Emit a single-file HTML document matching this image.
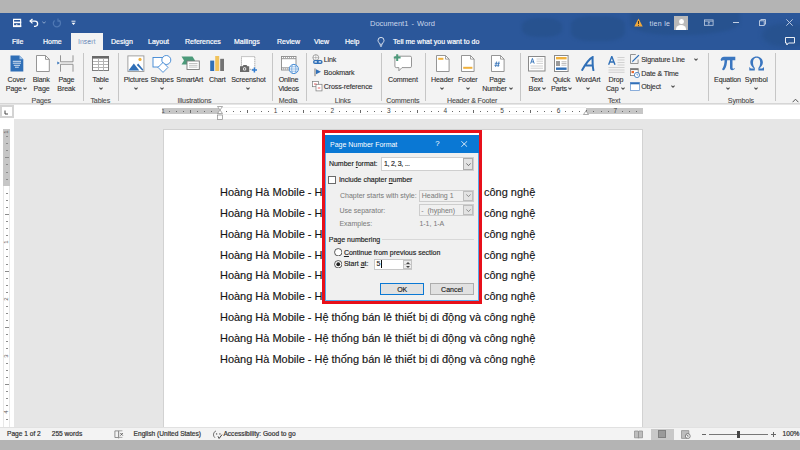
<!DOCTYPE html>
<html><head><meta charset="utf-8">
<style>
*{margin:0;padding:0;box-sizing:border-box}
html,body{width:800px;height:450px;overflow:hidden;background:#e6e6e6;font-family:"Liberation Sans",sans-serif;}
.a{position:absolute}
.t{position:absolute;white-space:nowrap;line-height:1}
#topstrip{left:0;top:0;width:800px;height:13px;background:#b4b4b4}
#title{left:0;top:13px;width:800px;height:37px;background:#2b579a}
#ribbon{left:0;top:50px;width:800px;height:54px;background:#f3f3f3;border-bottom:1px solid #d6d6d6}
#rulerrow{left:0;top:105px;width:800px;height:14px;background:#fff}
#docarea{left:14px;top:119px;width:786px;height:308px;background:#e6e6e6}
#vruler{left:0;top:119px;width:14px;height:308px;background:#fff}
#page{left:163px;top:129px;width:480px;height:298px;background:#fff;border-left:1px solid #d2d2d2;border-top:1px solid #d2d2d2;border-right:1px solid #d2d2d2}
#status{left:0;top:427px;width:800px;height:13px;background:#f3f3f3;border-top:1px solid #e1e1e1}
#botstrip{left:0;top:440px;width:800px;height:10px;background:#b4b4b4}
.tab{color:#fff;font-size:7px;-webkit-text-stroke:0.2px #fff}
.rl{color:#2e2e2e;font-size:7.1px;letter-spacing:-0.15px;-webkit-text-stroke:0.1px #2e2e2e}
.gl{color:#4a4a4a;font-size:7.1px;letter-spacing:-0.15px;-webkit-text-stroke:0.1px #4a4a4a}
.sep{position:absolute;top:53px;width:1px;height:48px;background:#c8c8c8}
.doc{position:absolute;left:220px;font-size:10.97px;color:#151515;white-space:nowrap;line-height:1;-webkit-text-stroke:0.15px #151515}
.dl{position:absolute;white-space:nowrap;line-height:1;font-size:7px;color:#222;-webkit-text-stroke:0.15px #222}
.dg{color:#7d7d7d;-webkit-text-stroke:0.05px #7d7d7d}
</style></head><body>
<div id="topstrip" class="a"></div>
<div id="title" class="a"></div>
<div class="a" style="left:0;top:13px;width:800px;height:37px;overflow:hidden">
<div class="a" style="left:522px;top:5px;width:40px;height:19px;border-radius:40%;background:#27528f;filter:blur(1.5px)"></div>
<div class="a" style="left:571px;top:3px;width:54px;height:25px;border-radius:35%;background:#27528f;filter:blur(1.5px)"></div>
<div class="a" style="left:630px;top:-4px;width:110px;height:26px;border-radius:0 0 50% 40%;background:#27528f;filter:blur(1.5px)"></div>
<div class="a" style="left:762px;top:10px;width:50px;height:24px;border-radius:50%;background:#27528f;filter:blur(2px)"></div>
</div>
<div id="ribbon" class="a"></div>
<div id="rulerrow" class="a"></div>
<div id="vruler" class="a"></div>
<div id="page" class="a"></div>
<div id="status" class="a"></div>
<div id="botstrip" class="a"></div>


<!-- QAT -->
<svg class="a" style="left:12px;top:18px" width="10" height="10" viewBox="0 0 10 10">
<path d="M1.55 1.35h7.1v7.2h-7.1z" fill="none" stroke="#fff" stroke-width="1.1"/>
<rect x="1" y="3.6" width="8.2" height="1.6" fill="#fff"/>
<rect x="1" y="7.2" width="8.2" height="1.9" fill="#fff"/>
<rect x="4" y="6.4" width="1.4" height="1" fill="#fff"/>
</svg>
<svg class="a" style="left:29px;top:18px" width="10" height="10" viewBox="0 0 10 10">
<path d="M1.6 3.1h4.3a2.6 2.6 0 0 1 0.2 5.2H5" fill="none" stroke="#fff" stroke-width="1.3"/>
<path d="M3.5 0.9L1.1 3.1 3.5 5.4" fill="none" stroke="#fff" stroke-width="1.3"/>
</svg>
<svg class="a" style="left:42px;top:21px" width="4" height="3" viewBox="0 0 4 3"><path d="M0.3 0.5L2 2.3 3.7 0.5" fill="none" stroke="#a9bcd9" stroke-width="0.8"/></svg>
<svg class="a" style="left:52px;top:18px" width="10" height="10" viewBox="0 0 10 10">
<path d="M6.8 2.2A3.6 3.6 0 1 1 2.6 2.5" fill="none" stroke="#4f78b3" stroke-width="1.3"/>
<path d="M6 0.5v2.6h2.6" fill="none" stroke="#4f78b3" stroke-width="1.2"/>
</svg>
<svg class="a" style="left:71px;top:20px" width="5" height="6" viewBox="0 0 5 6">
<path d="M0.5 1.2h4" stroke="#fff" stroke-width="0.9"/><path d="M0.5 2.8h4L2.5 5z" fill="#fff"/>
</svg>
<div class="t" style="left:370px;top:20px;font-size:7.5px;color:#c9d6ea;word-spacing:1px">Document1  -  Word</div>
<!-- right side -->
<svg class="a" style="left:634px;top:18px" width="9" height="9" viewBox="0 0 9 9"><path d="M4.5 0.5L8.7 8.5H0.3z" fill="#f2a93b"/><path d="M4.5 3v3" stroke="#222" stroke-width="0.9"/><circle cx="4.5" cy="7.3" r="0.5" fill="#222"/></svg>
<div class="t" style="left:649.5px;top:19.8px;font-size:7px;letter-spacing:0.3px;color:#cdd9ec">tien le</div>
<div class="a" style="left:674px;top:16px;width:14px;height:14px;background:#b9b9b9;overflow:hidden">
<div class="a" style="left:4.5px;top:2.5px;width:5px;height:5.5px;border-radius:50%;background:#fff"></div>
<div class="a" style="left:2px;top:8.5px;width:10px;height:8px;border-radius:50% 50% 0 0;background:#fff"></div>
</div>
<svg class="a" style="left:703.5px;top:19px" width="10" height="7" viewBox="0 0 10 7"><rect x="0.5" y="0.9" width="8.6" height="5.4" fill="none" stroke="#c3d0e4" stroke-width="0.8"/><path d="M0.5 2.2h8.6" stroke="#c3d0e4" stroke-width="0.7"/><path d="M4.8 3v3M3.7 4L4.8 3 5.9 4" fill="none" stroke="#c3d0e4" stroke-width="0.7"/></svg>
<div class="a" style="left:733px;top:21.5px;width:6px;height:1px;background:#c3d0e4"></div>
<svg class="a" style="left:759px;top:19px" width="7" height="7" viewBox="0 0 7 7"><rect x="0.5" y="1.8" width="4.7" height="4.7" fill="none" stroke="#c3d0e4" stroke-width="0.9"/><path d="M1.8 1.8V0.5h4.7v4.7H5.2" fill="none" stroke="#c3d0e4" stroke-width="0.9"/></svg>
<svg class="a" style="left:786px;top:18.5px" width="7" height="7" viewBox="0 0 7 7"><path d="M0.3 0.3L6.7 6.7M6.7 0.3L0.3 6.7" stroke="#c3d0e4" stroke-width="0.9"/></svg>
<svg class="a" style="left:785px;top:37px" width="10" height="9" viewBox="0 0 10 9"><path d="M0.5 0.5h9v5.5H3.5L1.8 8V6H0.5z" fill="none" stroke="#fff" stroke-width="0.9"/></svg>


<!-- tabs -->
<div class="a" style="left:71px;top:33px;width:32px;height:17px;background:#f3f3f3"></div>
<div class="t tab" style="left:12px;top:38px">File</div>
<div class="t tab" style="left:43px;top:38px">Home</div>
<div class="t tab" style="left:78px;top:38px;color:#2b579a">Insert</div>
<div class="t tab" style="left:111px;top:38px">Design</div>
<div class="t tab" style="left:148px;top:38px">Layout</div>
<div class="t tab" style="left:185px;top:38px">References</div>
<div class="t tab" style="left:234px;top:38px">Mailings</div>
<div class="t tab" style="left:277px;top:38px">Review</div>
<div class="t tab" style="left:314px;top:38px">View</div>
<div class="t tab" style="left:345px;top:38px">Help</div>
<div class="t tab" style="left:393px;top:38px">Tell me what you want to do</div>
<svg class="a" style="left:377px;top:37px" width="8" height="10" viewBox="0 0 8 10"><path d="M2.6 7.2C2.6 5.8 1 5 1 3.4A3 3 0 0 1 7 3.4C7 5 5.4 5.8 5.4 7.2z" fill="none" stroke="#fff" stroke-width="0.8"/><path d="M2.8 8.3h2.4M3.2 9.4h1.6" stroke="#fff" stroke-width="0.7"/></svg>


<!-- RIBBON -->
<!-- Cover Page -->
<svg class="a" style="left:10px;top:55px" width="14" height="17" viewBox="0 0 14 17">
<path d="M0.5 0.5h9l3.8 3.8v12.2H0.5z" fill="#2f6fb7"/>
<path d="M9.5 0.5v3.8h3.8" fill="#9dc0e6"/>
<path d="M2.8 6.3h8.2M2.8 8.2h8.2M3.8 10.3h6.2M5 12.2h3.8" stroke="#fff" stroke-width="0.8"/>
</svg>
<!-- Blank Page -->
<svg class="a" style="left:35.5px;top:55px" width="14" height="17" viewBox="0 0 14 17">
<path d="M0.5 0.5h9l3.8 3.8v12.2H0.5z" fill="#fff" stroke="#8a8a8a" stroke-width="0.9"/>
<path d="M9.5 0.5v3.8h3.8" fill="none" stroke="#8a8a8a" stroke-width="0.9"/>
</svg>
<!-- Page Break -->
<svg class="a" style="left:57px;top:55px" width="17" height="17" viewBox="0 0 17 17">
<path d="M3.5 0.3v6.5h12.5V0.3" fill="none" stroke="#8a8a8a" stroke-width="0.9"/>
<path d="M3.5 16.7V9.3h12.5v7.4" fill="none" stroke="#8a8a8a" stroke-width="0.9"/>
<path d="M0.3 6.5L2.8 8 0.3 9.5z" fill="#2f6fb7"/>
</svg>
<!-- Table -->
<svg class="a" style="left:92px;top:56px" width="17" height="15" viewBox="0 0 17 15">
<rect x="0.5" y="0.5" width="16" height="14" fill="#fff" stroke="#7e7e7e" stroke-width="1"/>
<rect x="0" y="0" width="17" height="2.6" fill="#686868"/>
<path d="M1 5.5h15M1 8.5h15M1 11.5h15M6.5 2.6v11.9M11.5 2.6v11.9" stroke="#b4b4b4" stroke-width="1"/>
</svg>
<!-- Pictures -->
<svg class="a" style="left:127px;top:55px" width="18" height="17" viewBox="0 0 18 17">
<rect x="0.9" y="0.9" width="16" height="15.6" fill="#fff" stroke="#999" stroke-width="0.9"/>
<path d="M1.5 15.6L6.8 8.6 12.3 15.6z" fill="#2f6fb7"/>
<path d="M9.8 10L11.2 8.6 16.2 14.6 16.2 15.6H15.2z" fill="#2f6fb7"/>
<circle cx="13" cy="4.4" r="1.6" fill="#f0b13c"/>
</svg>
<!-- Shapes -->
<svg class="a" style="left:152px;top:54.5px" width="20" height="18" viewBox="0 0 20 18">
<rect x="1" y="2.5" width="10" height="9.5" fill="#fff" stroke="#3d86d3" stroke-width="0.9"/>
<circle cx="14.3" cy="5" r="4.5" fill="#fff" stroke="#3d86d3" stroke-width="0.9"/>
<path d="M11 7.4L16 12.4 11 17.4 6 12.4z" fill="#fff" stroke="#3d86d3" stroke-width="0.9"/>
</svg>
<!-- SmartArt -->
<svg class="a" style="left:181px;top:56px" width="19" height="14" viewBox="0 0 19 14">
<path d="M0.5 0.5h11l2.5 4-2.5 4h-11l2.5-4z" fill="#4c9a7a"/>
<rect x="6" y="5" width="12.3" height="8.5" fill="#fff" stroke="#7a7a7a" stroke-width="0.9"/>
<path d="M8 7.5h8.5M8 9.3h8.5M8 11.1h8.5" stroke="#9a9a9a" stroke-width="0.6"/>
</svg>
<!-- Chart -->
<svg class="a" style="left:210px;top:56px" width="15" height="15" viewBox="0 0 15 15">
<rect x="0.2" y="4.6" width="4" height="10.4" fill="#2f6fb7"/>
<rect x="5.2" y="0" width="4" height="15" fill="#f0c25c"/>
<rect x="10.2" y="2.8" width="3.8" height="12.2" fill="#737373"/>
</svg>
<!-- Screenshot -->
<svg class="a" style="left:240px;top:55.5px" width="17" height="17" viewBox="0 0 17 17">
<rect x="1.5" y="0.6" width="13.3" height="12.7" fill="#fff" stroke="#777" stroke-width="0.8" stroke-dasharray="1 1"/>
<path d="M0 10.2h2.5l1-1.3h3l1 1.3H9.2V16H0z" fill="#6a6a6a"/>
<circle cx="4.6" cy="12.9" r="1.7" fill="#fff"/>
<circle cx="4.6" cy="12.9" r="0.9" fill="#6a6a6a"/>
<path d="M14.4 11.4v5.2M11.8 14h5.2" stroke="#2f7bd0" stroke-width="1.5"/>
</svg>
<!-- Online Videos -->
<svg class="a" style="left:281px;top:55.5px" width="18" height="18" viewBox="0 0 18 18">
<rect x="0.5" y="0.5" width="14.5" height="13.5" fill="#fff" stroke="#8a8a8a" stroke-width="0.9"/>
<path d="M0.5 2.7h14.5M0.5 11.8h14.5" stroke="#8a8a8a" stroke-width="0.9"/>
<path d="M2 1.6h1M4 1.6h1M6 1.6h1M8 1.6h1M10 1.6h1M12 1.6h1M2 12.9h1M4 12.9h1M6 12.9h1M8 12.9h1" stroke="#8a8a8a" stroke-width="0.8"/>
<circle cx="12.8" cy="13" r="4.6" fill="#fff" stroke="#3d86d3" stroke-width="0.9"/>
<path d="M8.2 13h9.2M9.2 10.8h7.2M9.2 15.2h7.2" stroke="#3d86d3" stroke-width="0.55"/>
<ellipse cx="12.8" cy="13" rx="2.1" ry="4.6" fill="none" stroke="#3d86d3" stroke-width="0.55"/>
</svg>
<!-- Link -->
<svg class="a" style="left:311.5px;top:53.5px" width="11" height="10.5" viewBox="0 0 11 10.5">
<circle cx="3.8" cy="3.6" r="2.9" fill="#fff" stroke="#7a7a7a" stroke-width="0.7"/>
<path d="M0.9 3.6h5.8M3.8 0.7v5.8" stroke="#8a8a8a" stroke-width="0.5"/>
<rect x="1" y="6" width="9.6" height="3.9" rx="1.95" fill="#2f6fb7"/>
<rect x="2.4" y="7.3" width="2.6" height="1.3" rx="0.65" fill="#fff"/>
<rect x="6.6" y="7.3" width="2.6" height="1.3" rx="0.65" fill="#fff"/>
</svg>
<!-- Bookmark -->
<svg class="a" style="left:313.5px;top:68px" width="8" height="8.5" viewBox="0 0 8 8.5">
<path d="M1 0.4v7.8" stroke="#6a6a6a" stroke-width="0.9"/>
<path d="M2 1.2l5 2.5-5 2.5z" fill="#2f6fb7"/>
</svg>
<!-- Cross-reference -->
<svg class="a" style="left:312px;top:81px" width="10.5" height="10.5" viewBox="0 0 10.5 10.5">
<rect x="0.4" y="0.4" width="6" height="5.3" fill="#fff" stroke="#7a7a7a" stroke-width="0.7"/>
<rect x="4" y="3.3" width="6" height="6.6" fill="#fff" stroke="#7a7a7a" stroke-width="0.7"/>
<path d="M2 3h2.5M5.8 7h2.5" stroke="#e03b3b" stroke-width="0.8"/>
</svg>
<!-- Comment -->
<svg class="a" style="left:392.5px;top:54px" width="20" height="18" viewBox="0 0 20 18">
<path d="M3.3 2.2h13.8a1.4 1.4 0 0 1 1.4 1.4v8.6a1.4 1.4 0 0 1-1.4 1.4H9L5.9 16.8V13.6H3.3a1.4 1.4 0 0 1-1.4-1.4V3.6A1.4 1.4 0 0 1 3.3 2.2z" fill="#fff" stroke="#8a8a8a" stroke-width="0.9"/>
<path d="M4.2 0.2v6.8M0.8 3.6h6.8" stroke="#4c9a7a" stroke-width="2"/>
</svg>
<!-- Header -->
<svg class="a" style="left:436px;top:55px" width="14" height="17" viewBox="0 0 14 17">
<path d="M0.5 0.5h9l3.6 3.6v12.4H0.5z" fill="#fff" stroke="#8a8a8a" stroke-width="0.9"/>
<path d="M9.5 0.5v3.6h3.6" fill="none" stroke="#8a8a8a" stroke-width="0.8"/>
<rect x="2.2" y="2.8" width="5.2" height="2" fill="#f0b13c"/>
</svg>
<!-- Footer -->
<svg class="a" style="left:461px;top:55px" width="14" height="17" viewBox="0 0 14 17">
<path d="M0.5 0.5h9l3.6 3.6v12.4H0.5z" fill="#fff" stroke="#8a8a8a" stroke-width="0.9"/>
<path d="M9.5 0.5v3.6h3.6" fill="none" stroke="#8a8a8a" stroke-width="0.8"/>
<rect x="2.2" y="11.8" width="9.2" height="2" fill="#f0b13c"/>
</svg>
<!-- Page Number -->
<svg class="a" style="left:491px;top:55px" width="14" height="17" viewBox="0 0 14 17">
<path d="M0.5 0.5h9l3.6 3.6v12.4H0.5z" fill="#fff" stroke="#8a8a8a" stroke-width="0.9"/>
<path d="M9.5 0.5v3.6h3.6" fill="none" stroke="#8a8a8a" stroke-width="0.8"/>
<path d="M5.6 6.5l-1 5.5M8 6.5l-1 5.5M3.8 8.3h5M3.4 10.3h5" stroke="#2f6fb7" stroke-width="0.8"/>
</svg>
<!-- Text Box -->
<svg class="a" style="left:528px;top:55.5px" width="18" height="16" viewBox="0 0 18 16">
<rect x="0.5" y="0.5" width="16.5" height="14.5" fill="#fff" stroke="#8a8a8a" stroke-width="1"/>
<path d="M2.6 7.6L4.4 2.4 6.2 7.6M3.2 5.9h2.4" fill="none" stroke="#2f6fb7" stroke-width="0.9"/>
<path d="M8.5 3h6.5M8.5 5.2h6.5M8.5 7.4h6.5M2.5 10h12.5M2.5 12.2h12.5" stroke="#b4b4b4" stroke-width="0.6"/>
</svg>
<!-- Quick Parts -->
<svg class="a" style="left:554px;top:55px" width="15" height="17" viewBox="0 0 15 17">
<rect x="0.5" y="0.5" width="13.6" height="16" fill="#fff" stroke="#8a8a8a" stroke-width="1"/>
<rect x="2" y="2" width="10.6" height="2.4" fill="#f0b13c"/>
<rect x="2" y="6" width="4" height="5" fill="#9a9a9a"/>
<path d="M7.5 6.8h5M7.5 8.5h5M7.5 10.2h5" stroke="#a0a0a0" stroke-width="0.7"/>
<rect x="2" y="12.5" width="10.6" height="2.4" fill="#2f6fb7"/>
</svg>
<!-- WordArt -->
<svg class="a" style="left:580.5px;top:55.5px" width="14" height="15" viewBox="0 0 14 15">
<path d="M1.2 14C4 9 8 3.2 11.6 1.2c0 4-0.2 8.8 0.8 13M4.5 9.6h7.4" fill="none" stroke="#2f6fb7" stroke-width="2" stroke-linecap="round"/>
</svg>
<!-- Drop Cap -->
<svg class="a" style="left:607.5px;top:55.5px" width="17" height="17" viewBox="0 0 17 17">
<path d="M0.6 8.8L3.8 0.4 7 8.8M1.8 6h4" fill="none" stroke="#2f6fb7" stroke-width="1.4"/>
<path d="M9.5 1.5h7M9.5 4h7M9.5 6.5h7M9.5 9h7M0.5 11.5h16M0.5 14h16M0.5 16.3h16" stroke="#c2c2c2" stroke-width="0.7"/>
</svg>
<!-- Signature Line -->
<svg class="a" style="left:629.5px;top:54px" width="10" height="10" viewBox="0 0 10 10">
<path d="M5.8 0.5H0.5v9h7.6V5.5" fill="none" stroke="#7a7a7a" stroke-width="0.8"/>
<path d="M2.6 7.4L8.9 1.1" stroke="#2f6fb7" stroke-width="1.3"/>
<path d="M1.8 8.4l0.6-1.3 0.7 0.7z" fill="#2f6fb7"/>
</svg>
<!-- Date & Time -->
<svg class="a" style="left:629.5px;top:67.5px" width="10" height="10" viewBox="0 0 10 10">
<rect x="0.4" y="0.6" width="7.8" height="7" fill="#fff" stroke="#7a7a7a" stroke-width="0.8"/>
<rect x="0.4" y="0.6" width="7.8" height="1.5" fill="#7a7a7a"/>
<rect x="1.5" y="3" width="2.5" height="2.2" fill="#e86a2f"/>
<circle cx="7" cy="7" r="2.6" fill="#fff" stroke="#2f6fb7" stroke-width="0.8"/>
<path d="M7 5.5V7h1.2" fill="none" stroke="#2f6fb7" stroke-width="0.6"/>
</svg>
<!-- Object -->
<svg class="a" style="left:629.5px;top:81.5px" width="10" height="9" viewBox="0 0 10 9">
<rect x="0.4" y="0.5" width="9" height="8" fill="#fff" stroke="#6f9bd3" stroke-width="0.8"/>
<rect x="0.4" y="0.5" width="9" height="1.8" fill="#2f6fb7"/>
</svg>
<!-- Equation pi -->
<svg class="a" style="left:720px;top:55.5px" width="16" height="15" viewBox="0 0 16 15">
<path d="M0.6 3.8C1.2 1.8 2.2 0.8 4 0.8H15.3V4.3H3.8C2.6 4.3 1.8 4.5 1.2 5z" fill="#3a76c0"/>
<path d="M4.6 4h2.6C7 7.5 6.4 11 4.6 13.6 4 14.4 3.2 14.4 2.6 14 2 13.5 2.2 12.8 2.8 12 4 10 4.5 7 4.6 4z" fill="#3a76c0"/>
<path d="M10 4h2.5v7.5c0 0.9 0.4 1.2 0.9 1.2 0.4 0 0.8-0.2 1.1-0.6l0.4 0.4C14.2 13.6 13.2 14.2 12.2 14.2 10.8 14.2 10 13.3 10 11.5z" fill="#3a76c0"/>
</svg>
<!-- Symbol Omega -->
<svg class="a" style="left:748.5px;top:56px" width="16" height="15" viewBox="0 0 16 15">
<path d="M0.3 14.6V11.2h0.6c0.2 0.8 0.5 1.2 1.2 1.2H5C3 11 1.3 9 1.3 6.3 1.3 2.8 4.2 0.4 7.6 0.4S13.9 2.8 13.9 6.3C13.9 9 12.2 11 10.2 12.4h3c0.7 0 1-0.4 1.2-1.2h0.6v3.4H9.4V12C10.6 10.6 11.2 8.6 11.2 6.5 11.2 3.5 9.8 1.8 7.6 1.8S4 3.5 4 6.5C4 8.6 4.6 10.6 5.8 12v2.6z" fill="#3a76c0"/>
</svg>
<div class="a" style="left:83px;top:53px;width:1px;height:48px;background:#c6c6c6"></div>
<div class="a" style="left:117.5px;top:53px;width:1px;height:48px;background:#c6c6c6"></div>
<div class="a" style="left:271.5px;top:53px;width:1px;height:48px;background:#c6c6c6"></div>
<div class="a" style="left:305.5px;top:53px;width:1px;height:48px;background:#c6c6c6"></div>
<div class="a" style="left:381px;top:53px;width:1px;height:48px;background:#c6c6c6"></div>
<div class="a" style="left:425px;top:53px;width:1px;height:48px;background:#c6c6c6"></div>
<div class="a" style="left:519.5px;top:53px;width:1px;height:48px;background:#c6c6c6"></div>
<div class="a" style="left:708px;top:53px;width:1px;height:48px;background:#c6c6c6"></div>
<div class="a" style="left:774.5px;top:53px;width:1px;height:48px;background:#c6c6c6"></div>
<div class="t rl" style="left:-43.5px;top:77.0px;width:120px;text-align:center;">Cover</div>
<div class="t rl" style="left:-46.2px;top:86.3px;width:120px;text-align:center;">Page</div>
<svg class="a" style="left:23.3px;top:86.8px" width="4" height="3" viewBox="0 0 4 3"><path d="M0.4 0.6L2 2.2 3.6 0.6" fill="none" stroke="#555" stroke-width="1.1"/></svg>
<div class="t rl" style="left:-18.75px;top:77.0px;width:120px;text-align:center;">Blank</div>
<div class="t rl" style="left:-18.5px;top:86.3px;width:120px;text-align:center;">Page</div>
<div class="t rl" style="left:6.400000000000006px;top:77.0px;width:120px;text-align:center;">Page</div>
<div class="t rl" style="left:6.25px;top:86.3px;width:120px;text-align:center;">Break</div>
<div class="t gl" style="left:-18.75px;top:98.1px;width:120px;text-align:center;">Pages</div>
<div class="t rl" style="left:40.599999999999994px;top:77.0px;width:120px;text-align:center;">Table</div>
<svg class="a" style="left:98.5px;top:86.8px" width="4" height="3" viewBox="0 0 4 3"><path d="M0.4 0.6L2 2.2 3.6 0.6" fill="none" stroke="#555" stroke-width="1.1"/></svg>
<div class="t gl" style="left:40.25px;top:98.1px;width:120px;text-align:center;">Tables</div>
<div class="t rl" style="left:75.9px;top:77.0px;width:120px;text-align:center;">Pictures</div>
<svg class="a" style="left:133.5px;top:86.8px" width="4" height="3" viewBox="0 0 4 3"><path d="M0.4 0.6L2 2.2 3.6 0.6" fill="none" stroke="#555" stroke-width="1.1"/></svg>
<div class="t rl" style="left:102px;top:77.0px;width:120px;text-align:center;">Shapes</div>
<svg class="a" style="left:160px;top:86.8px" width="4" height="3" viewBox="0 0 4 3"><path d="M0.4 0.6L2 2.2 3.6 0.6" fill="none" stroke="#555" stroke-width="1.1"/></svg>
<div class="t rl" style="left:129.75px;top:77.0px;width:120px;text-align:center;">SmartArt</div>
<div class="t rl" style="left:157.25px;top:77.0px;width:120px;text-align:center;">Chart</div>
<div class="t rl" style="left:188.4px;top:77.0px;width:120px;text-align:center;">Screenshot</div>
<svg class="a" style="left:246px;top:86.8px" width="4" height="3" viewBox="0 0 4 3"><path d="M0.4 0.6L2 2.2 3.6 0.6" fill="none" stroke="#555" stroke-width="1.1"/></svg>
<div class="t gl" style="left:134.4px;top:98.1px;width:120px;text-align:center;">Illustrations</div>
<div class="t rl" style="left:228.5px;top:77.0px;width:120px;text-align:center;">Online</div>
<div class="t rl" style="left:228.5px;top:86.3px;width:120px;text-align:center;">Videos</div>
<div class="t gl" style="left:228.10000000000002px;top:98.1px;width:120px;text-align:center;">Media</div>
<div class="t rl" style="left:323.75px;top:57px">Link</div>
<div class="t rl" style="left:323.75px;top:70.4px">Bookmark</div>
<div class="t rl" style="left:323.75px;top:84.2px">Cross-reference</div>
<div class="t gl" style="left:282.75px;top:98.1px;width:120px;text-align:center;">Links</div>
<div class="t rl" style="left:342.9px;top:77.0px;width:120px;text-align:center;">Comment</div>
<div class="t gl" style="left:342.9px;top:98.1px;width:120px;text-align:center;">Comments</div>
<div class="t rl" style="left:382.25px;top:77.0px;width:120px;text-align:center;">Header</div>
<svg class="a" style="left:440px;top:86.8px" width="4" height="3" viewBox="0 0 4 3"><path d="M0.4 0.6L2 2.2 3.6 0.6" fill="none" stroke="#555" stroke-width="1.1"/></svg>
<div class="t rl" style="left:407.75px;top:77.0px;width:120px;text-align:center;">Footer</div>
<svg class="a" style="left:465.5px;top:86.8px" width="4" height="3" viewBox="0 0 4 3"><path d="M0.4 0.6L2 2.2 3.6 0.6" fill="none" stroke="#555" stroke-width="1.1"/></svg>
<div class="t rl" style="left:437.25px;top:77.0px;width:120px;text-align:center;">Page</div>
<div class="t rl" style="left:434.5px;top:86.3px;width:120px;text-align:center;">Number</div>
<svg class="a" style="left:509px;top:86.8px" width="4" height="3" viewBox="0 0 4 3"><path d="M0.4 0.6L2 2.2 3.6 0.6" fill="none" stroke="#555" stroke-width="1.1"/></svg>
<div class="t gl" style="left:412.1px;top:98.1px;width:120px;text-align:center;">Header &amp; Footer</div>
<div class="t rl" style="left:476.75px;top:77.0px;width:120px;text-align:center;">Text</div>
<div class="t rl" style="left:474.5px;top:86.3px;width:120px;text-align:center;">Box</div>
<svg class="a" style="left:541.5px;top:86.8px" width="4" height="3" viewBox="0 0 4 3"><path d="M0.4 0.6L2 2.2 3.6 0.6" fill="none" stroke="#555" stroke-width="1.1"/></svg>
<div class="t rl" style="left:501.4px;top:77.0px;width:120px;text-align:center;">Quick</div>
<div class="t rl" style="left:499px;top:86.3px;width:120px;text-align:center;">Parts</div>
<svg class="a" style="left:567.5px;top:86.8px" width="4" height="3" viewBox="0 0 4 3"><path d="M0.4 0.6L2 2.2 3.6 0.6" fill="none" stroke="#555" stroke-width="1.1"/></svg>
<div class="t rl" style="left:528px;top:77.0px;width:120px;text-align:center;">WordArt</div>
<svg class="a" style="left:586px;top:86.8px" width="4" height="3" viewBox="0 0 4 3"><path d="M0.4 0.6L2 2.2 3.6 0.6" fill="none" stroke="#555" stroke-width="1.1"/></svg>
<div class="t rl" style="left:556px;top:77.0px;width:120px;text-align:center;">Drop</div>
<div class="t rl" style="left:552.2px;top:86.3px;width:120px;text-align:center;">Cap</div>
<svg class="a" style="left:620.8px;top:86.8px" width="4" height="3" viewBox="0 0 4 3"><path d="M0.4 0.6L2 2.2 3.6 0.6" fill="none" stroke="#555" stroke-width="1.1"/></svg>
<div class="t rl" style="left:641.25px;top:57px">Signature Line</div>
<svg class="a" style="left:694px;top:58.0px" width="4" height="3" viewBox="0 0 4 3"><path d="M0.4 0.6L2 2.2 3.6 0.6" fill="none" stroke="#555" stroke-width="1.1"/></svg>
<div class="t rl" style="left:641.25px;top:70.5px">Date &amp; Time</div>
<div class="t rl" style="left:641.25px;top:84.2px">Object</div>
<svg class="a" style="left:670.5px;top:85.0px" width="4" height="3" viewBox="0 0 4 3"><path d="M0.4 0.6L2 2.2 3.6 0.6" fill="none" stroke="#555" stroke-width="1.1"/></svg>
<div class="t gl" style="left:554.1px;top:98.1px;width:120px;text-align:center;">Text</div>
<div class="t rl" style="left:667.5px;top:77.0px;width:120px;text-align:center;">Equation</div>
<svg class="a" style="left:725.5px;top:86.8px" width="4" height="3" viewBox="0 0 4 3"><path d="M0.4 0.6L2 2.2 3.6 0.6" fill="none" stroke="#555" stroke-width="1.1"/></svg>
<div class="t rl" style="left:696.25px;top:77.0px;width:120px;text-align:center;">Symbol</div>
<svg class="a" style="left:754px;top:86.8px" width="4" height="3" viewBox="0 0 4 3"><path d="M0.4 0.6L2 2.2 3.6 0.6" fill="none" stroke="#555" stroke-width="1.1"/></svg>
<div class="t gl" style="left:680.9px;top:98.1px;width:120px;text-align:center;">Symbols</div>
<svg class="a" style="left:792px;top:98px" width="7" height="5" viewBox="0 0 7 5"><path d="M0.6 4.2L3.5 1.2 6.4 4.2" fill="none" stroke="#555" stroke-width="1"/></svg>
<!-- /RIBBON -->
<!-- REST -->
<div class="a" style="left:219px;top:107px;width:367px;height:8px;border-top:1px solid #f1f1f1;border-bottom:1px solid #f1f1f1"></div>
<div class="a" style="left:162px;top:108px;width:57px;height:6px;background:#c6c6c6"></div>
<div class="a" style="left:586px;top:108px;width:57px;height:6px;background:#c6c6c6"></div>
<div class="a" style="left:211.43px;top:110.5px;width:1px;height:1px;background:#6a6a6a"></div>
<div class="a" style="left:204.35px;top:110.5px;width:1px;height:1px;background:#6a6a6a"></div>
<div class="a" style="left:197.28px;top:110.5px;width:1px;height:1px;background:#6a6a6a"></div>
<div class="a" style="left:190.20px;top:109.5px;width:1px;height:3px;background:#6a6a6a"></div>
<div class="a" style="left:183.12px;top:110.5px;width:1px;height:1px;background:#6a6a6a"></div>
<div class="a" style="left:176.05px;top:110.5px;width:1px;height:1px;background:#6a6a6a"></div>
<div class="a" style="left:168.97px;top:110.5px;width:1px;height:1px;background:#6a6a6a"></div>
<div class="t" style="left:161.5px;top:108px;font-size:6px;color:#555">1</div>
<div class="a" style="left:225.57px;top:110.5px;width:1px;height:1px;background:#6a6a6a"></div>
<div class="a" style="left:232.65px;top:110.5px;width:1px;height:1px;background:#6a6a6a"></div>
<div class="a" style="left:239.72px;top:110.5px;width:1px;height:1px;background:#6a6a6a"></div>
<div class="a" style="left:246.80px;top:109.5px;width:1px;height:3px;background:#6a6a6a"></div>
<div class="a" style="left:253.88px;top:110.5px;width:1px;height:1px;background:#6a6a6a"></div>
<div class="a" style="left:260.95px;top:110.5px;width:1px;height:1px;background:#6a6a6a"></div>
<div class="a" style="left:268.02px;top:110.5px;width:1px;height:1px;background:#6a6a6a"></div>
<div class="a" style="left:282.18px;top:110.5px;width:1px;height:1px;background:#6a6a6a"></div>
<div class="a" style="left:289.25px;top:110.5px;width:1px;height:1px;background:#6a6a6a"></div>
<div class="a" style="left:296.33px;top:110.5px;width:1px;height:1px;background:#6a6a6a"></div>
<div class="a" style="left:303.40px;top:109.5px;width:1px;height:3px;background:#6a6a6a"></div>
<div class="a" style="left:310.48px;top:110.5px;width:1px;height:1px;background:#6a6a6a"></div>
<div class="a" style="left:317.55px;top:110.5px;width:1px;height:1px;background:#6a6a6a"></div>
<div class="a" style="left:324.62px;top:110.5px;width:1px;height:1px;background:#6a6a6a"></div>
<div class="t" style="left:215.60px;width:120px;text-align:center;top:107.8px;font-size:6.5px;color:#444">1</div>
<div class="a" style="left:338.77px;top:110.5px;width:1px;height:1px;background:#6a6a6a"></div>
<div class="a" style="left:345.85px;top:110.5px;width:1px;height:1px;background:#6a6a6a"></div>
<div class="a" style="left:352.93px;top:110.5px;width:1px;height:1px;background:#6a6a6a"></div>
<div class="a" style="left:360.00px;top:109.5px;width:1px;height:3px;background:#6a6a6a"></div>
<div class="a" style="left:367.07px;top:110.5px;width:1px;height:1px;background:#6a6a6a"></div>
<div class="a" style="left:374.15px;top:110.5px;width:1px;height:1px;background:#6a6a6a"></div>
<div class="a" style="left:381.22px;top:110.5px;width:1px;height:1px;background:#6a6a6a"></div>
<div class="t" style="left:272.20px;width:120px;text-align:center;top:107.8px;font-size:6.5px;color:#444">2</div>
<div class="a" style="left:395.38px;top:110.5px;width:1px;height:1px;background:#6a6a6a"></div>
<div class="a" style="left:402.45px;top:110.5px;width:1px;height:1px;background:#6a6a6a"></div>
<div class="a" style="left:409.53px;top:110.5px;width:1px;height:1px;background:#6a6a6a"></div>
<div class="a" style="left:416.60px;top:109.5px;width:1px;height:3px;background:#6a6a6a"></div>
<div class="a" style="left:423.68px;top:110.5px;width:1px;height:1px;background:#6a6a6a"></div>
<div class="a" style="left:430.75px;top:110.5px;width:1px;height:1px;background:#6a6a6a"></div>
<div class="a" style="left:437.82px;top:110.5px;width:1px;height:1px;background:#6a6a6a"></div>
<div class="t" style="left:328.80px;width:120px;text-align:center;top:107.8px;font-size:6.5px;color:#444">3</div>
<div class="a" style="left:451.97px;top:110.5px;width:1px;height:1px;background:#6a6a6a"></div>
<div class="a" style="left:459.05px;top:110.5px;width:1px;height:1px;background:#6a6a6a"></div>
<div class="a" style="left:466.12px;top:110.5px;width:1px;height:1px;background:#6a6a6a"></div>
<div class="a" style="left:473.20px;top:109.5px;width:1px;height:3px;background:#6a6a6a"></div>
<div class="a" style="left:480.27px;top:110.5px;width:1px;height:1px;background:#6a6a6a"></div>
<div class="a" style="left:487.35px;top:110.5px;width:1px;height:1px;background:#6a6a6a"></div>
<div class="a" style="left:494.42px;top:110.5px;width:1px;height:1px;background:#6a6a6a"></div>
<div class="t" style="left:385.40px;width:120px;text-align:center;top:107.8px;font-size:6.5px;color:#444">4</div>
<div class="a" style="left:508.57px;top:110.5px;width:1px;height:1px;background:#6a6a6a"></div>
<div class="a" style="left:515.65px;top:110.5px;width:1px;height:1px;background:#6a6a6a"></div>
<div class="a" style="left:522.73px;top:110.5px;width:1px;height:1px;background:#6a6a6a"></div>
<div class="a" style="left:529.80px;top:109.5px;width:1px;height:3px;background:#6a6a6a"></div>
<div class="a" style="left:536.88px;top:110.5px;width:1px;height:1px;background:#6a6a6a"></div>
<div class="a" style="left:543.95px;top:110.5px;width:1px;height:1px;background:#6a6a6a"></div>
<div class="a" style="left:551.02px;top:110.5px;width:1px;height:1px;background:#6a6a6a"></div>
<div class="t" style="left:442.00px;width:120px;text-align:center;top:107.8px;font-size:6.5px;color:#444">5</div>
<div class="a" style="left:565.18px;top:110.5px;width:1px;height:1px;background:#6a6a6a"></div>
<div class="a" style="left:572.25px;top:110.5px;width:1px;height:1px;background:#6a6a6a"></div>
<div class="a" style="left:579.33px;top:110.5px;width:1px;height:1px;background:#6a6a6a"></div>
<div class="a" style="left:586.40px;top:109.5px;width:1px;height:3px;background:#6a6a6a"></div>
<div class="a" style="left:593.48px;top:110.5px;width:1px;height:1px;background:#6a6a6a"></div>
<div class="a" style="left:600.55px;top:110.5px;width:1px;height:1px;background:#6a6a6a"></div>
<div class="a" style="left:607.62px;top:110.5px;width:1px;height:1px;background:#6a6a6a"></div>
<div class="t" style="left:498.60px;width:120px;text-align:center;top:107.8px;font-size:6.5px;color:#444">6</div>
<div class="a" style="left:621.78px;top:110.5px;width:1px;height:1px;background:#6a6a6a"></div>
<div class="a" style="left:628.85px;top:110.5px;width:1px;height:1px;background:#6a6a6a"></div>
<div class="a" style="left:635.93px;top:110.5px;width:1px;height:1px;background:#6a6a6a"></div>
<div class="t" style="left:555.20px;width:120px;text-align:center;top:107.8px;font-size:6.5px;color:#444">7</div>
<svg class="a" style="left:216.5px;top:105.5px" width="6" height="14" viewBox="0 0 6 14"><path d="M0.5 0.5h5L3 4 5.5 7.5h-5L3 4z" fill="#fff" stroke="#888" stroke-width="0.7"/><rect x="0.5" y="9" width="5" height="4.5" fill="#fff" stroke="#888" stroke-width="0.7"/></svg>
<svg class="a" style="left:583px;top:110px" width="6" height="5" viewBox="0 0 6 5"><path d="M0.5 4.5L3 0.8 5.5 4.5z" fill="#fff" stroke="#888" stroke-width="0.7"/></svg>
<div class="a" style="left:0px;top:105px;width:14px;height:13px;background:#d4d4d4"></div>
<div class="a" style="left:2px;top:107px;width:10px;height:9px;background:#fff"></div>
<svg class="a" style="left:4px;top:110px" width="5" height="5" viewBox="0 0 5 5"><path d="M1 0.5v3.5h3" fill="none" stroke="#444" stroke-width="1"/></svg>
<div class="a" style="left:2.5px;top:186px;width:7px;height:241px;border-left:1px solid #e8e8e8;border-right:1px solid #e8e8e8"></div>
<div class="a" style="left:3px;top:128.5px;width:6.5px;height:57.5px;background:#c6c6c6"></div>
<div class="a" style="left:5.5px;top:178.62px;width:2px;height:1px;background:#8c8c8c"></div>
<div class="a" style="left:5.5px;top:171.55px;width:2px;height:1px;background:#8c8c8c"></div>
<div class="a" style="left:5.5px;top:164.47px;width:2px;height:1px;background:#8c8c8c"></div>
<div class="a" style="left:4.5px;top:157.40px;width:4px;height:1px;background:#8c8c8c"></div>
<div class="a" style="left:5.5px;top:150.32px;width:2px;height:1px;background:#8c8c8c"></div>
<div class="a" style="left:5.5px;top:143.25px;width:2px;height:1px;background:#8c8c8c"></div>
<div class="a" style="left:5.5px;top:136.17px;width:2px;height:1px;background:#8c8c8c"></div>
<div class="t" style="left:3.5px;top:129px;font-size:6px;color:#555;transform:rotate(-90deg)">1</div>
<div class="a" style="left:5.5px;top:192.77px;width:2px;height:1px;background:#8c8c8c"></div>
<div class="a" style="left:5.5px;top:199.85px;width:2px;height:1px;background:#8c8c8c"></div>
<div class="a" style="left:5.5px;top:206.92px;width:2px;height:1px;background:#8c8c8c"></div>
<div class="a" style="left:4.5px;top:214.00px;width:4px;height:1px;background:#8c8c8c"></div>
<div class="a" style="left:5.5px;top:221.07px;width:2px;height:1px;background:#8c8c8c"></div>
<div class="a" style="left:5.5px;top:228.15px;width:2px;height:1px;background:#8c8c8c"></div>
<div class="a" style="left:5.5px;top:235.22px;width:2px;height:1px;background:#8c8c8c"></div>
<div class="a" style="left:5.5px;top:249.37px;width:2px;height:1px;background:#8c8c8c"></div>
<div class="a" style="left:5.5px;top:256.45px;width:2px;height:1px;background:#8c8c8c"></div>
<div class="a" style="left:5.5px;top:263.52px;width:2px;height:1px;background:#8c8c8c"></div>
<div class="a" style="left:4.5px;top:270.60px;width:4px;height:1px;background:#8c8c8c"></div>
<div class="a" style="left:5.5px;top:277.67px;width:2px;height:1px;background:#8c8c8c"></div>
<div class="a" style="left:5.5px;top:284.75px;width:2px;height:1px;background:#8c8c8c"></div>
<div class="a" style="left:5.5px;top:291.82px;width:2px;height:1px;background:#8c8c8c"></div>
<div class="t" style="left:4px;top:239.30px;font-size:6px;color:#555;transform:rotate(-90deg)">1</div>
<div class="a" style="left:5.5px;top:305.97px;width:2px;height:1px;background:#8c8c8c"></div>
<div class="a" style="left:5.5px;top:313.05px;width:2px;height:1px;background:#8c8c8c"></div>
<div class="a" style="left:5.5px;top:320.12px;width:2px;height:1px;background:#8c8c8c"></div>
<div class="a" style="left:4.5px;top:327.20px;width:4px;height:1px;background:#8c8c8c"></div>
<div class="a" style="left:5.5px;top:334.27px;width:2px;height:1px;background:#8c8c8c"></div>
<div class="a" style="left:5.5px;top:341.35px;width:2px;height:1px;background:#8c8c8c"></div>
<div class="a" style="left:5.5px;top:348.42px;width:2px;height:1px;background:#8c8c8c"></div>
<div class="t" style="left:4px;top:295.90px;font-size:6px;color:#555;transform:rotate(-90deg)">2</div>
<div class="a" style="left:5.5px;top:362.57px;width:2px;height:1px;background:#8c8c8c"></div>
<div class="a" style="left:5.5px;top:369.65px;width:2px;height:1px;background:#8c8c8c"></div>
<div class="a" style="left:5.5px;top:376.73px;width:2px;height:1px;background:#8c8c8c"></div>
<div class="a" style="left:4.5px;top:383.80px;width:4px;height:1px;background:#8c8c8c"></div>
<div class="a" style="left:5.5px;top:390.88px;width:2px;height:1px;background:#8c8c8c"></div>
<div class="a" style="left:5.5px;top:397.95px;width:2px;height:1px;background:#8c8c8c"></div>
<div class="a" style="left:5.5px;top:405.02px;width:2px;height:1px;background:#8c8c8c"></div>
<div class="t" style="left:4px;top:352.50px;font-size:6px;color:#555;transform:rotate(-90deg)">3</div>
<div class="a" style="left:5.5px;top:419.18px;width:2px;height:1px;background:#8c8c8c"></div>
<div class="t" style="left:4px;top:409.10px;font-size:6px;color:#555;transform:rotate(-90deg)">4</div>
<div class="t" style="left:7px;top:431px;font-size:6.6px;color:#333;-webkit-text-stroke:0.2px #333">Page 1 of 2</div>
<div class="t" style="left:51.75px;top:431px;font-size:6.6px;color:#333;-webkit-text-stroke:0.2px #333">255 words</div>
<svg class="a" style="left:114px;top:429.5px" width="10" height="9" viewBox="0 0 10 9"><path d="M0.9 0.9h3.7v6.6H0.9z" fill="none" stroke="#777" stroke-width="0.8"/><path d="M4.6 0.8h3.8M4.6 7.4h3.8M4.6 0.8v7.8" fill="none" stroke="#888" stroke-width="0.7"/><path d="M6.4 3l2.4 2.6M8.8 3L6.4 5.6" stroke="#555" stroke-width="0.9"/></svg>
<div class="t" style="left:133.6px;top:431px;font-size:6.6px;color:#333;-webkit-text-stroke:0.2px #333">English (United States)</div>
<svg class="a" style="left:211.5px;top:429.5px" width="11" height="10" viewBox="0 0 11 10"><path d="M4 0.9A4 4 0 0 0 3 7.8" fill="none" stroke="#666" stroke-width="0.9"/><circle cx="4.6" cy="3.9" r="0.7" fill="#444"/><circle cx="7.9" cy="3.9" r="0.7" fill="#444"/><path d="M6 6.3L7.1 8.5 10 4.6" fill="none" stroke="#333" stroke-width="0.9"/></svg>
<div class="t" style="left:223.4px;top:431px;font-size:6.6px;color:#333;-webkit-text-stroke:0.2px #333">Accessibility: Good to go</div>
<svg class="a" style="left:634px;top:429.5px" width="9" height="9" viewBox="0 0 9 9"><path d="M0.5 1h3.6l0.4 0.4 0.4-0.4h3.6v6.8H4.9L4.5 8.3 4.1 7.8H0.5z" fill="#bdbdbd" stroke="#8a8a8a" stroke-width="0.7"/><path d="M4.5 1.4v6.6" stroke="#777" stroke-width="0.6"/></svg>
<div class="a" style="left:651px;top:428.5px;width:23px;height:11.5px;background:#c8c8c8"></div>
<div class="a" style="left:658.2px;top:430px;width:8.3px;height:7.8px;background:#9a9a9a;border:0.8px solid #808080"></div>
<svg class="a" style="left:681px;top:429.5px" width="10" height="9" viewBox="0 0 10 9"><path d="M0.5 0.6h7.3v4.6H5.5v3.2H0.5z" fill="#bdbdbd" stroke="#8a8a8a" stroke-width="0.7"/><circle cx="6.8" cy="6.1" r="2.4" fill="#fff" stroke="#555" stroke-width="0.7"/><path d="M5.6 5.2l1.6 0.5-0.4 1.6" fill="none" stroke="#555" stroke-width="0.7"/></svg>
<div class="a" style="left:701.5px;top:434px;width:4.5px;height:1px;background:#666"></div>
<div class="a" style="left:709px;top:434px;width:58.5px;height:1px;background:#777"></div>
<div class="a" style="left:737px;top:431px;width:2.5px;height:6.5px;background:#444"></div>
<div class="a" style="left:770.5px;top:434px;width:5px;height:1px;background:#666"></div>
<div class="a" style="left:772.5px;top:432px;width:1px;height:5px;background:#666"></div>
<div class="t" style="left:782.6px;top:431px;font-size:6.6px;color:#333;-webkit-text-stroke:0.2px #333">100%</div>
<!-- /REST -->
<!-- doc text -->
<div class="doc" style="top:187.20px">Hoàng Hà Mobile - Hệ thống bán lẻ thiết bị di động và công nghệ</div>
<div class="doc" style="top:208.00px">Hoàng Hà Mobile - Hệ thống bán lẻ thiết bị di động và công nghệ</div>
<div class="doc" style="top:228.80px">Hoàng Hà Mobile - Hệ thống bán lẻ thiết bị di động và công nghệ</div>
<div class="doc" style="top:249.60px">Hoàng Hà Mobile - Hệ thống bán lẻ thiết bị di động và công nghệ</div>
<div class="doc" style="top:270.40px">Hoàng Hà Mobile - Hệ thống bán lẻ thiết bị di động và công nghệ</div>
<div class="doc" style="top:291.20px">Hoàng Hà Mobile - Hệ thống bán lẻ thiết bị di động và công nghệ</div>
<div class="doc" style="top:312.00px">Hoàng Hà Mobile - Hệ thống bán lẻ thiết bị di động và công nghệ</div>
<div class="doc" style="top:332.80px">Hoàng Hà Mobile - Hệ thống bán lẻ thiết bị di động và công nghệ</div>
<div class="doc" style="top:353.60px">Hoàng Hà Mobile - Hệ thống bán lẻ thiết bị di động và công nghệ</div>

<!-- DIALOG -->
<div class="a" style="left:322px;top:130px;width:160px;height:174px;border:3px solid #e8101a"></div>
<div class="a" style="left:325px;top:133px;width:154px;height:2px;background:#fff"></div>
<div class="a" style="left:325px;top:135px;width:154px;height:166px;background:#f0f0f0;border:1px solid #58a6e8"></div>
<div class="a" style="left:325px;top:135px;width:153.5px;height:18px;background:#0a78d4"></div>
<div class="t" style="left:330px;top:140.6px;font-size:7px;color:#fff">Page Number Format</div>
<div class="t" style="left:435.3px;top:140px;font-size:7.8px;color:#fff">?</div>
<svg class="a" style="left:461px;top:141px" width="6.5" height="6" viewBox="0 0 6.5 6"><path d="M0.3 0.2L6.2 5.8M6.2 0.2L0.3 5.8" stroke="#fff" stroke-width="0.8"/></svg>
<div class="dl" style="left:328.9px;top:160.3px">Number <u>f</u>ormat:</div>
<div class="a" style="left:381.4px;top:157.2px;width:92.6px;height:13.4px;background:#fff;border:1px solid #cfcfcf"></div>
<div class="dl" style="left:384px;top:160.3px;letter-spacing:-0.3px">1, 2, 3, ...</div>
<div class="a" style="left:463.3px;top:158.2px;width:10px;height:11.4px;background:#e3e3e3;border:1px solid #adadad"></div>
<svg class="a" style="left:466px;top:162.5px" width="5" height="3" viewBox="0 0 5 3"><path d="M0.3 0.4L2.5 2.6 4.7 0.4" fill="none" stroke="#555" stroke-width="0.8"/></svg>
<div class="a" style="left:328.4px;top:175.5px;width:8px;height:8px;background:#fff;border:1px solid #6a6a6a"></div>
<div class="dl" style="left:338.9px;top:176.4px">Include chapter <u>n</u>umber</div>
<div class="dl dg" style="left:340px;top:192.3px">Chapter starts with style:</div>
<div class="a" style="left:419.2px;top:189.5px;width:54.6px;height:12.2px;background:#f0f0f0;border:1px solid #cdcdcd"></div>
<div class="dl dg" style="left:421.7px;top:192.3px">Heading 1</div>
<div class="a" style="left:463.3px;top:190.5px;width:10px;height:10.2px;background:#e3e3e3;border:1px solid #bdbdbd"></div>
<svg class="a" style="left:466px;top:194.3px" width="5" height="3" viewBox="0 0 5 3"><path d="M0.3 0.4L2.5 2.6 4.7 0.4" fill="none" stroke="#777" stroke-width="0.8"/></svg>
<div class="dl dg" style="left:339.4px;top:207.4px">Use separator:</div>
<div class="a" style="left:419.2px;top:204.2px;width:54.6px;height:12.2px;background:#f0f0f0;border:1px solid #cdcdcd"></div>
<div class="dl dg" style="left:421.2px;top:207.4px;word-spacing:2px">-  (hyphen)</div>
<div class="a" style="left:463.3px;top:205.2px;width:10px;height:10.2px;background:#e3e3e3;border:1px solid #bdbdbd"></div>
<svg class="a" style="left:466px;top:209px" width="5" height="3" viewBox="0 0 5 3"><path d="M0.3 0.4L2.5 2.6 4.7 0.4" fill="none" stroke="#777" stroke-width="0.8"/></svg>
<div class="dl dg" style="left:339.4px;top:220px">Examples:</div>
<div class="dl dg" style="left:419.4px;top:220px">1-1, 1-A</div>
<div class="dl" style="left:328.8px;top:236.2px">Page numbering</div>
<div class="a" style="left:382px;top:239px;width:92px;height:1px;background:#d8d8d8"></div>
<svg class="a" style="left:333.5px;top:247.8px" width="8.5" height="8.5" viewBox="0 0 8.5 8.5"><circle cx="4.25" cy="4.25" r="3.7" fill="#fff" stroke="#333" stroke-width="0.8"/></svg>
<div class="dl" style="left:343.9px;top:248.6px"><u>C</u>ontinue from previous section</div>
<svg class="a" style="left:333.5px;top:259.7px" width="8.5" height="8.5" viewBox="0 0 8.5 8.5"><circle cx="4.25" cy="4.25" r="3.7" fill="#fff" stroke="#333" stroke-width="0.8"/><circle cx="4.25" cy="4.25" r="1.9" fill="#222"/></svg>
<div class="dl" style="left:343.9px;top:260.3px">Start <u>a</u>t:</div>
<div class="a" style="left:374.2px;top:258.8px;width:38.1px;height:11.3px;background:#fff;border:1px solid #c8c8c8"></div>
<div class="dl" style="left:376.5px;top:260.3px">5</div>
<div class="a" style="left:380.6px;top:260.2px;width:0.8px;height:8px;background:#111"></div>
<div class="a" style="left:403px;top:259.6px;width:9px;height:5px;background:#ececec;border:1px solid #c4c4c4"></div>
<div class="a" style="left:403px;top:264.4px;width:9px;height:5px;background:#ececec;border:1px solid #c4c4c4"></div>
<svg class="a" style="left:404.5px;top:260.5px" width="6" height="8" viewBox="0 0 6 8"><path d="M1 2.9L3 1 5 2.9z" fill="#444"/><path d="M1 5.1L3 7 5 5.1z" fill="#444"/></svg>
<div class="a" style="left:380.4px;top:282.9px;width:43.6px;height:12.4px;background:#e1e1e1;border:1.3px solid #0a78d4"></div>
<div class="dl" style="left:380.4px;top:286px;width:43.6px;text-align:center">OK</div>
<div class="a" style="left:430.1px;top:282.9px;width:43.8px;height:12.4px;background:#e1e1e1;border:1px solid #adadad"></div>
<div class="dl" style="left:430.1px;top:286px;width:43.8px;text-align:center">Cancel</div>
<!-- /DIALOG -->
</body></html>
